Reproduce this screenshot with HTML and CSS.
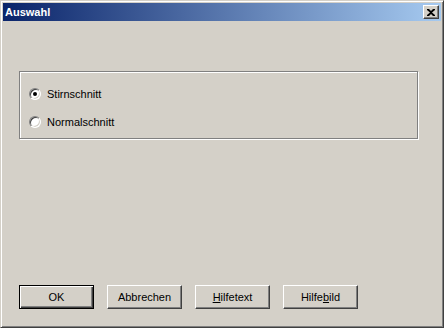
FILE: index.html
```html
<!DOCTYPE html>
<html>
<head>
    <title>Auswahl</title>
    <link rel="stylesheet" href="styles.css">
</head>
<body>
<div class="window">
    <div class="titlebar">
        <span class="title">Auswahl</span>
        <span class="close-btn">
            <svg width="8" height="7" viewBox="0 0 8 7">
                <path d="M0 0h2l2 2 2-2h2v1L5 3.5 8 6v1H6L4 5 2 7H0V6l3-2.5L0 1z" fill="#000"/>
            </svg>
        </span>
    </div>
    <div class="content">
        <div class="group">
            <label class="radio-row">
                <span class="radio checked"></span>
                Stirnschnitt
            </label>
            <label class="radio-row">
                <span class="radio"></span>
                Normalschnitt
            </label>
        </div>
        <div class="buttons">
            <button class="btn default"><span>OK</span></button>
            <button class="btn"><span>Abbrechen</span></button>
            <button class="btn"><span><u>H</u>ilfetext</span></button>
            <button class="btn"><span>Hilfe<u>b</u>ild</span></button>
        </div>
    </div>
</div>
</body>
</html>
```

FILE: styles.css
```css
body {
    margin: 0;
    font-family: "Liberation Sans", Arial, sans-serif;
    font-size: 11px;
    background: #d4d0c8;
}

.window {
    width: 444px;
    height: 328px;
    box-sizing: border-box;
    background: #d4d0c8;
    border: 1px solid;
    border-color: #d4d0c8 #404040 #404040 #d4d0c8;
    box-shadow: inset 1px 1px #fff, inset -1px -1px #808080;
    padding: 2px;
    display: flex;
    flex-direction: column;
}

.titlebar {
    height: 18px;
    display: flex;
    align-items: center;
    justify-content: space-between;
    padding: 0 2px 0 2px;
    background: linear-gradient(to right, #0a246a, #a6caf0);
}

.title {
    color: #fff;
    font-weight: bold;
    font-size: 11px;
    font-family: "Liberation Sans", Arial, sans-serif;
}

.close-btn {
    width: 16px;
    height: 14px;
    box-sizing: border-box;
    background: #d4d0c8;
    border: 1px solid;
    border-color: #fff #404040 #404040 #fff;
    box-shadow: inset -1px -1px #808080;
    display: flex;
    align-items: center;
    justify-content: center;
}

.content {
    flex: 1;
    display: flex;
    flex-direction: column;
    padding: 0 0 0 16px;
}

.group {
    margin-top: 50px;
    width: 399px;
    height: 68px;
    border: 1px solid #808080;
    box-shadow: inset 1px 1px #fff, 1px 1px #fff;
    padding: 16px 0 0 9px;
    box-sizing: border-box;
    display: flex;
    flex-direction: column;
    gap: 16px;
}

.radio-row {
    display: flex;
    align-items: center;
    gap: 6px;
    height: 12px;
    color: #000;
}

.radio {
    width: 12px;
    height: 12px;
    box-sizing: border-box;
    border-radius: 50%;
    background: #fff;
    border: 1px solid;
    border-color: #808080 #fff #fff #808080;
    box-shadow: inset 1px 1px #404040, inset -1px -1px #d4d0c8;
    position: relative;
}

.radio.checked::after {
    content: "";
    position: absolute;
    left: 3px;
    top: 3px;
    width: 4px;
    height: 4px;
    border-radius: 50%;
    background: #000;
}

.buttons {
    margin-top: 146px;
    display: flex;
    gap: 13px;
}

.btn {
    width: 75px;
    height: 24px;
    box-sizing: border-box;
    background: #d4d0c8;
    border: 1px solid;
    border-color: #fff #404040 #404040 #fff;
    box-shadow: inset -1px -1px #808080;
    font-family: "Liberation Sans", Arial, sans-serif;
    font-size: 11px;
    color: #000;
    padding: 0;
    display: flex;
    align-items: center;
    justify-content: center;
}

.btn.default {
    border: 1px solid #000;
    box-shadow: inset 1px 1px #fff, inset -1px -1px #404040, inset -2px -2px #808080;
}
```
